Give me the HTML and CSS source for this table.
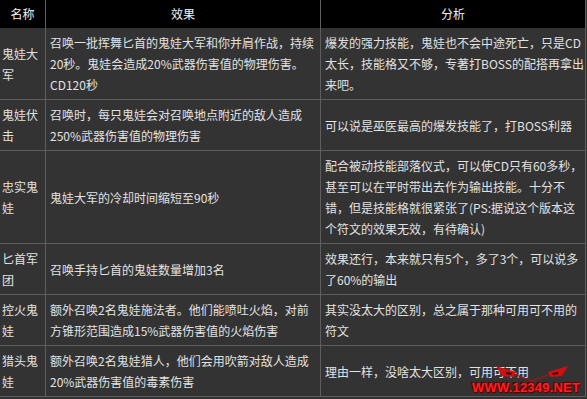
FILE: index.html
```html
<!DOCTYPE html>
<html lang="zh-CN">
<head>
<meta charset="utf-8">
<title>鬼娃符文</title>
<link rel="stylesheet" href="styles.css">
</head>
<body>
<div class="page">
<table class="skills">
<colgroup><col class="c-name"><col class="c-effect"><col class="c-note"></colgroup>
<thead>
<tr><th>名称</th><th>效果</th><th>分析</th></tr>
</thead>
<tbody>
<tr>
<td class="name">鬼娃大<br>军</td>
<td>召唤一批挥舞匕首的鬼娃大军和你并肩作战，持续<br>20秒。鬼娃会造成20%武器伤害值的物理伤害。<br>CD120秒</td>
<td>爆发的强力技能，鬼娃也不会中途死亡，只是CD<br>太长，技能格又不够，专著打BOSS的配搭再拿出<br>来吧。</td>
</tr>
<tr>
<td class="name">鬼娃伏<br>击</td>
<td>召唤时，每只鬼娃会对召唤地点附近的敌人造成<br>250%武器伤害值的物理伤害</td>
<td>可以说是巫医最高的爆发技能了，打BOSS利器</td>
</tr>
<tr>
<td class="name">忠实鬼<br>娃</td>
<td>鬼娃大军的冷却时间缩短至90秒</td>
<td>配合被动技能部落仪式，可以使CD只有60多秒，<br>甚至可以在平时带出去作为输出技能。十分不<br>错，但是技能格就很紧张了(PS:据说这个版本这<br>个符文的效果无效，有待确认)</td>
</tr>
<tr>
<td class="name">匕首军<br>团</td>
<td>召唤手持匕首的鬼娃数量增加3名</td>
<td>效果还行，本来就只有5个，多了3个，可以说多<br>了60%的输出</td>
</tr>
<tr>
<td class="name">控火鬼<br>娃</td>
<td>额外召唤2名鬼娃施法者。他们能喷吐火焰，对前<br>方锥形范围造成15%武器伤害值的火焰伤害</td>
<td>其实没太大的区别，总之属于那种可用可不用的<br>符文</td>
</tr>
<tr>
<td class="name">猎头鬼<br>娃</td>
<td>额外召唤2名鬼娃猎人，他们会用吹箭对敌人造成<br>20%武器伤害值的毒素伤害</td>
<td>理由一样，没啥太大区别，可用可不用</td>
</tr>
</tbody>
</table>
<div class="watermark">
<svg class="eyes" width="76" height="18" viewBox="0 0 76 18">
<path d="M2 2 L22 8 L20 13 L8 12 Z" fill="#d01010"/>
<path d="M12 8 L18 9 L17 11 L12 10 Z" fill="#300"/>
<path d="M74 2 L54 8 L56 13 L68 12 Z" fill="#d01010"/>
<path d="M64 8 L58 9 L59 11 L64 10 Z" fill="#300"/>
<path d="M22 11 L38 17 L54 11" fill="none" stroke="#b01010" stroke-width="1.2"/>
</svg>
<span class="site">WWW.12349.NET</span>
</div>
</div>
</body>
</html>
```
FILE: styles.css
```css
html, body {
  margin: 0;
  padding: 0;
  background: #333333;
}

.page {
  position: relative;
  width: 587px;
  height: 399px;
  overflow: hidden;
}

.skills {
  table-layout: fixed;
  border-collapse: separate;
  border-spacing: 0;
  width: 586px;
  font-family: "Noto Sans CJK SC", "Liberation Sans", sans-serif;
  font-size: 12px;
  color: #e2e2e2;
}

.c-name { width: 46px; }
.c-effect { width: 275px; }
.c-note { width: 265px; }

.skills th {
  background: #000000;
  color: #f2f2f2;
  font-weight: normal;
  height: 28px;
  padding: 0;
  line-height: 28px;
  border-right: 1px solid #5e5e5e;
  box-sizing: border-box;
  text-align: center;
}

.skills td {
  background: #333333;
  padding: 4px 4px;
  line-height: 21px;
  vertical-align: middle;
  white-space: nowrap;
  border-right: 1px solid #5e5e5e;
  border-bottom: 1px solid #5e5e5e;
  overflow: visible;
}

.skills td.name {
  padding-left: 2px;
  padding-right: 0;
}

.watermark {
  position: absolute;
  right: 3px;
  bottom: 5px;
  width: 112px;
  height: 30px;
}

.eyes {
  position: absolute;
  left: 22px;
  top: 0;
}

.site {
  position: absolute;
  left: 0;
  bottom: 0;
  font-family: "Liberation Sans", sans-serif;
  font-weight: bold;
  font-size: 13px;
  line-height: 13px;
  letter-spacing: 0.2px;
  color: #ff2020;
  text-shadow: 0 0 2px #600000, 1px 1px 0 #5a0000, -1px -1px 0 #5a0000;
}
```
